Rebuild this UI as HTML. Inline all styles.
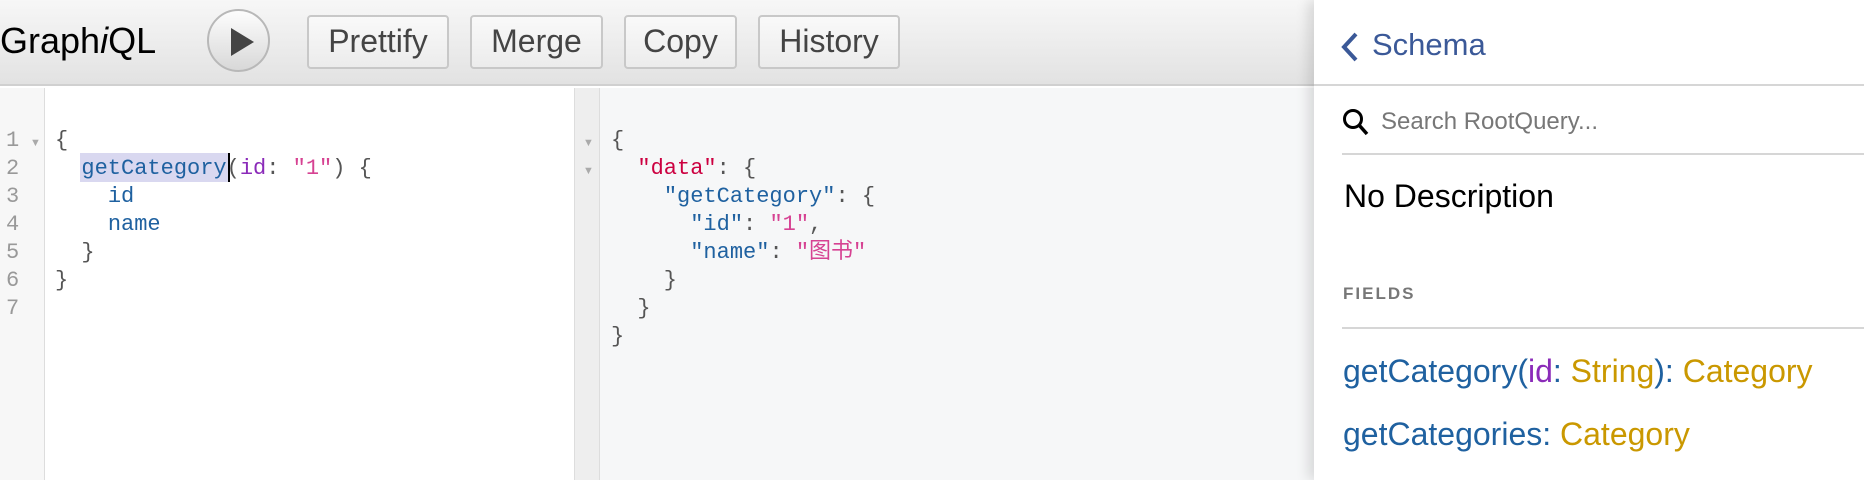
<!DOCTYPE html>
<html><head><meta charset="utf-8"><style>
*{margin:0;padding:0;box-sizing:border-box}
body{width:1864px;height:480px;overflow:hidden;background:#fff;font-family:"Liberation Sans",sans-serif;position:relative}
.tb{position:absolute;left:0;top:0;width:1314px;height:86px;background:linear-gradient(#f7f7f7,#e2e2e2);border-bottom:2px solid #d0d0d0}
.logo{position:absolute;left:0;top:20px;font-size:36px;color:#000}
.play{position:absolute;left:207px;top:9px;width:63px;height:63px;border-radius:50%;background:linear-gradient(#fdfdfd,#d8d8d8);border:2px solid #b8b8b8}
.play:after{content:"";position:absolute;left:22px;top:17px;border-left:23px solid #444;border-top:14px solid transparent;border-bottom:14px solid transparent}
.btn{position:absolute;top:15px;height:54px;background:linear-gradient(#f9f9f9,#ececec);border:2px solid #c8c8c8;border-radius:4px;font-size:32px;color:#444;text-align:center;line-height:48px}
.gut{position:absolute;left:0;top:88px;width:45px;height:392px;background:#f7f7f7;border-right:1px solid #ddd}
.mid{position:absolute;left:574px;top:88px;width:26px;height:392px;background:#eeeeee;border-left:1px solid #ddd;border-right:1px solid #ddd}
.res{position:absolute;left:600px;top:88px;width:714px;height:392px;background:#f6f7f8}
.code{position:absolute;font-family:"Liberation Mono","Noto Sans CJK SC",monospace;font-size:22px;line-height:28px;color:#555;white-space:pre}
.ln{color:#999}
.p{color:#1F61A0}.s{color:#D64292}.a{color:#8B2BB9}.r{color:#CC0040}
.fold{position:absolute;font-size:11px;color:#aaa}
.doc{position:absolute;left:1314px;top:0;width:550px;height:480px;background:#fff;box-shadow:-6px 0 12px rgba(0,0,0,.12)}
.dh{height:86px;border-bottom:2px solid #d6d6d6;position:relative}
</style></head><body>
<div class="tb">
<div class="logo">Graph<i>i</i>QL</div>
<div class="play"></div>
<div class="btn" style="left:307px;width:142px">Prettify</div>
<div class="btn" style="left:470px;width:133px">Merge</div>
<div class="btn" style="left:624px;width:113px">Copy</div>
<div class="btn" style="left:758px;width:142px">History</div>
</div>
<div class="gut"></div>
<div class="code ln" style="left:6px;top:127px">1
2
3
4
5
6
7</div>
<div class="fold" style="left:30px;top:137px">▼</div>
<div style="position:absolute;left:80px;top:153px;width:148px;height:29px;background:#d9d8f0"></div>
<div style="position:absolute;left:228px;top:153px;width:2px;height:29px;background:#000"></div>
<div class="code" style="left:55px;top:127px">{
  <span class="p">getCategory</span>(<span class="a">id</span>: <span class="s">"1"</span>) {
    <span class="p">id</span>
    <span class="p">name</span>
  }
}</div>
<div class="mid"></div>
<div class="fold" style="left:583px;top:137px">▼</div>
<div class="fold" style="left:583px;top:165px">▼</div>
<div class="res"></div>
<div class="code" style="left:611px;top:127px">{
  <span class="r">"data"</span>: {
    <span class="p">"getCategory"</span>: {
      <span class="p">"id"</span>: <span class="s">"1"</span>,
      <span class="p">"name"</span>: <span class="s">"图书"</span>
    }
  }
}</div>
<div class="doc">
<div class="dh">
<svg style="position:absolute;left:26px;top:32px" width="20" height="30"><path d="M16 2 L4 15 L16 28" stroke="#3B5998" stroke-width="4" fill="none"/></svg>
<div style="position:absolute;left:58px;top:27px;font-size:31px;color:#3B5998">Schema</div>
</div>
<svg style="position:absolute;left:28px;top:108px" width="28" height="30"><circle cx="11" cy="11" r="8.5" stroke="#000" stroke-width="3" fill="none"/><path d="M17 17 L25 26" stroke="#000" stroke-width="3.5"/></svg>
<div style="position:absolute;left:67px;top:108px;font-size:24px;color:#777">Search RootQuery...</div>
<div style="position:absolute;left:28px;top:153px;right:0;height:2px;background:#d6d6d6"></div>
<div style="position:absolute;left:30px;top:178px;font-size:32px;color:#000">No Description</div>
<div style="position:absolute;left:29px;top:284px;font-size:17px;font-weight:bold;letter-spacing:2px;color:#777">FIELDS</div>
<div style="position:absolute;left:28px;top:327px;right:0;height:2px;background:#d6d6d6"></div>
<div style="position:absolute;left:29px;top:353px;font-size:32px;color:#1F61A0">getCategory(<span style="color:#8B2BB9">id</span>: <span style="color:#CA9800">String</span>): <span style="color:#CA9800">Category</span></div>
<div style="position:absolute;left:29px;top:416px;font-size:32px;color:#1F61A0">getCategories: <span style="color:#CA9800">Category</span></div>
</div>
</body></html>
